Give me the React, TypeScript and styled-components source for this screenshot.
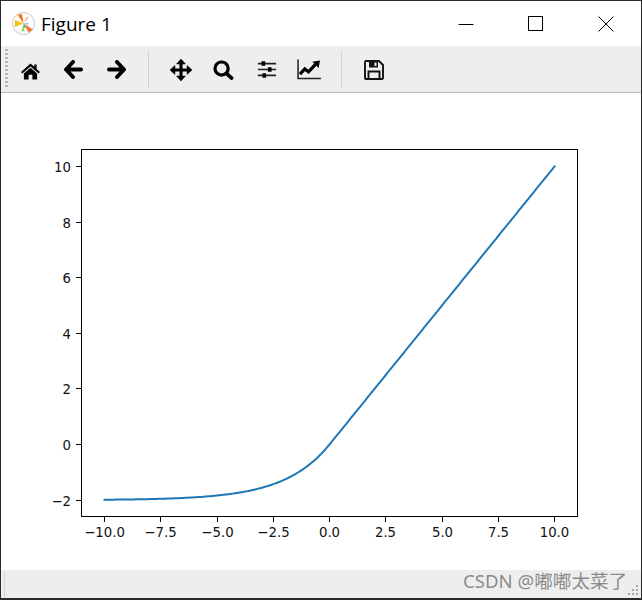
import React from 'react';
import styled, { createGlobalStyle } from 'styled-components';

const GlobalStyle = createGlobalStyle`
  html, body { margin: 0; padding: 0; background: #fff; }
  #root { width: 642px; height: 600px; }
`;

const Win = styled.div`
  position: relative;
  box-sizing: border-box;
  width: 642px;
  height: 600px;
  border: 1px solid #2b2b2b;
  border-bottom-width: 2px;
  display: flex;
  flex-direction: column;
  background: #fff;
  overflow: hidden;
`;

const TitleBar = styled.header`
  height: 45px;
  display: flex;
  align-items: center;
  padding-left: 11px;
  background: #fff;
`;

const Title = styled.span`
  margin-left: 5px;
  font: 19px 'Open Sans', 'Noto Sans', sans-serif;
  color: #000;
  flex: 1;
`;

const WinBtn = styled.div`
  width: 70px;
  height: 45px;
  display: flex;
  align-items: center;
  justify-content: center;
`;

const Toolbar = styled.div`
  height: 46px;
  background: #eeeeee;
  border-bottom: 1px solid #b9b9b9;
  display: flex;
  align-items: center;
  padding-left: 4px;
`;

const Grip = styled.div`
  width: 3px;
  height: 40px;
  margin-right: 1px;
  background: repeating-linear-gradient(to bottom, #b4b4b4 0 2px, transparent 2px 4px);
`;

const ToolBtn = styled.div`
  box-sizing: border-box;
  width: 43px;
  height: 46px;
  padding-top: 1px;
  display: flex;
  align-items: center;
  justify-content: center;
`;

const Sep = styled.div`
  width: 1px;
  height: 38px;
  margin: 0 10px;
  background: #d4d4d4;
`;

const Canvas = styled.main`
  flex: 1;
  background: #fff;
`;

const PlotSvg = styled.svg`
  display: block;
  text {
    font-family: 'DejaVu Sans', sans-serif;
    font-size: 13.3px;
    fill: #111;
  }
`;

const StatusBar = styled.footer`
  height: 28px;
  background: #eeeeee;
  display: flex;
  align-items: center;
  padding-left: 3px;
`;

const StatusSep = styled.div`
  width: 1px;
  height: 25px;
  background: #d2d2d2;
`;

const SizeGrip = styled.svg`
  position: absolute;
  right: 1px;
  bottom: 1px;
`;

const Watermark = styled.div`
  position: absolute;
  left: 462px;
  top: 568px;
  font: 18.6px 'Noto Sans', 'Noto Sans CJK SC', sans-serif;
  line-height: 24px;
  color: rgba(120, 120, 120, 0.85);
  white-space: nowrap;
`;

const HomeIcon = styled.svg`
  margin-top: 3px;
`;

const Logo = () => (
  <svg width="24" height="24" viewBox="0 0 24 24">
    <circle cx="11.5" cy="11.5" r="11" fill="#fff" stroke="#c4c4c4" strokeWidth="1" />
    <path d="M11.5 11.5 L5.5 2.8 L10 2 Z" fill="#f5780f" />
    <path d="M11.5 11.5 L21 17.5 L16.5 20.5 Z" fill="#f07a3a" />
    <path d="M11.5 11.5 L3 8 L2.6 15 Z" fill="#f2c21a" />
    <path d="M11.5 11.5 L9.5 19 L12.5 19.5 Z" fill="#9ad65a" />
    <path d="M11.5 11.5 L15 4.5 L16.8 5.6 Z" fill="#e8b090" />
    <path d="M11.5 11.5 L16 11 L16.5 13 Z" fill="#7fb8e0" />
    <path d="M11.5 11.5 L12 16 L14 15 Z" fill="#4fb8a0" />
  </svg>
);

const Home = () => (
  <HomeIcon width="21" height="17" viewBox="0 0 21 18">
    <path d="M10.5 0.5 L14.5 4 V1.5 H17 V6.3 L20.5 9.4 L19.2 11 L10.5 3.6 L1.8 11 L0.5 9.4 Z" fill="#000" />
    <path d="M10.5 5 L17.5 11 V17.5 H12.5 V12.5 H8.5 V17.5 H3.5 V11 Z" fill="#000" />
  </HomeIcon>
);

const ArrowLeft = () => (
  <svg width="19" height="19" viewBox="0 0 19 19">
    <path d="M9 2 L2 9.5 L9 17 M3 9.5 H17" fill="none" stroke="#000" strokeWidth="4" strokeLinejoin="round" strokeLinecap="round" />
  </svg>
);

const ArrowRight = () => (
  <svg width="19" height="19" viewBox="0 0 19 19">
    <path d="M10 2 L17 9.5 L10 17 M16 9.5 H2" fill="none" stroke="#000" strokeWidth="4" strokeLinejoin="round" strokeLinecap="round" />
  </svg>
);

const Move = () => (
  <svg width="22" height="22" viewBox="0 0 24 24">
    <path d="M12 3 V21 M3 12 H21" stroke="#000" strokeWidth="3.4" />
    <path d="M12 0 L16.8 5.4 H7.2 Z M12 24 L16.8 18.6 H7.2 Z M0 12 L5.4 7.2 V16.8 Z M24 12 L18.6 7.2 V16.8 Z" fill="#000" stroke="#000" strokeWidth="0.6" strokeLinejoin="round" />
  </svg>
);

const Search = () => (
  <svg width="21" height="20" viewBox="0 0 22 21">
    <circle cx="9" cy="9" r="6.9" fill="none" stroke="#000" strokeWidth="3.4" />
    <path d="M14 14 L19.5 19" stroke="#000" strokeWidth="3.8" strokeLinecap="round" />
  </svg>
);

const Sliders = () => (
  <svg width="20" height="19" viewBox="0 0 22 20">
    <path d="M1 3.5 H21 M1 10 H21 M1 16.5 H21" stroke="#222" strokeWidth="1.8" />
    <path d="M5 1 H9 V6 H5 Z M12 7.5 H16 V12.5 H12 Z M6 14 H10 V19 H6 Z" fill="#000" />
  </svg>
);

const LineChart = () => (
  <svg width="25" height="21" viewBox="0 0 26 22">
    <path d="M1 0.5 V20.5 H25" fill="none" stroke="#222" strokeWidth="1.6" />
    <path d="M3 16 L8 10.5 L12 13.5 L19 6" fill="none" stroke="#000" strokeWidth="3.4" />
    <path d="M16 3 L24 1.5 L22.5 9.5 Z" fill="#000" />
  </svg>
);

const Save = () => (
  <svg width="20" height="20" viewBox="0 0 20 20">
    <path d="M1.8 1 H15 L19 5 V18 A1 1 0 0 1 18 19 H2 A1 1 0 0 1 1 18 V2 A1 1 0 0 1 1.8 1 Z" fill="none" stroke="#111" strokeWidth="1.9" />
    <path d="M5 1 H14 V7.5 H5 Z" fill="#111" />
    <path d="M10.5 2.5 H12.5 V6 H10.5 Z" fill="#eee" />
    <path d="M4.5 18.5 V11.5 H15.5 V18.5" fill="none" stroke="#111" strokeWidth="1.9" />
  </svg>
);

// canvas coordinates: the svg starts at y=93 of the page, x=1
const px = (x: number) => 103.5 + (x + 10) * 22.5;
const py = (y: number) => 73.5 + (10 - y) * 27.8;

const curve = Array.from({ length: 201 }, (_, i) => {
  const x = -10 + i * 0.1;
  const y = x < 0 ? 2 * (Math.exp(x / 2) - 1) : x;
  return `${px(x).toFixed(2)},${py(y).toFixed(2)}`;
}).join(' ');

const xTicks = ['\u221210.0', '\u22127.5', '\u22125.0', '\u22122.5', '0.0', '2.5', '5.0', '7.5', '10.0'];
const yTicks = [10, 8, 6, 4, 2, 0, -2];

const Plot = () => (
  <PlotSvg width="640" height="477" viewBox="0 0 640 477">
    <polyline points={curve} fill="none" stroke="#1f77b4" strokeWidth="2" strokeLinecap="square" strokeLinejoin="round" />
    <rect x="80.5" y="56.5" width="496" height="367" fill="none" stroke="#000" strokeWidth="1" />
    {xTicks.map((label, i) => {
      const x = Math.floor(px(-10 + i * 2.5)) + 0.5;
      return (
        <g key={label}>
          <line x1={x} x2={x} y1="424" y2="429" stroke="#000" />
          <text x={x} y="444" textAnchor="middle">{label}</text>
        </g>
      );
    })}
    {yTicks.map((v) => {
      const y = Math.floor(py(v)) + 0.5;
      return (
        <g key={v}>
          <line x1="75" x2="80" y1={y} y2={y} stroke="#000" />
          <text x="70" y={y + 5} textAnchor="end">{v < 0 ? `\u2212${-v}` : v}</text>
        </g>
      );
    })}
  </PlotSvg>
);

const App = () => (
  <Win>
    <GlobalStyle />
    <TitleBar>
      <Logo />
      <Title>Figure 1</Title>
      <WinBtn>
        <svg width="16" height="16"><path d="M0.5 8.5 H15.5" stroke="#000" /></svg>
      </WinBtn>
      <WinBtn>
        <svg width="16" height="16"><rect x="0.5" y="0.5" width="14" height="14" fill="none" stroke="#000" /></svg>
      </WinBtn>
      <WinBtn>
        <svg width="16" height="16"><path d="M0.5 0.5 L15.5 15.5 M15.5 0.5 L0.5 15.5" stroke="#000" /></svg>
      </WinBtn>
    </TitleBar>
    <Toolbar>
      <Grip />
      <ToolBtn><Home /></ToolBtn>
      <ToolBtn><ArrowLeft /></ToolBtn>
      <ToolBtn><ArrowRight /></ToolBtn>
      <Sep />
      <ToolBtn><Move /></ToolBtn>
      <ToolBtn><Search /></ToolBtn>
      <ToolBtn><Sliders /></ToolBtn>
      <ToolBtn><LineChart /></ToolBtn>
      <Sep />
      <ToolBtn><Save /></ToolBtn>
    </Toolbar>
    <Canvas><Plot /></Canvas>
    <StatusBar><StatusSep /></StatusBar>
    <Watermark>CSDN @嘟嘟太菜了</Watermark>
    <SizeGrip width="12" height="12" viewBox="0 0 12 12">
      <path d="M8 0h2v2h-2z M4 4h2v2h-2z M8 4h2v2h-2z M0 8h2v2h-2z M4 8h2v2h-2z M8 8h2v2h-2z" fill="#a8a8a8" />
    </SizeGrip>
  </Win>
);

export default App;
